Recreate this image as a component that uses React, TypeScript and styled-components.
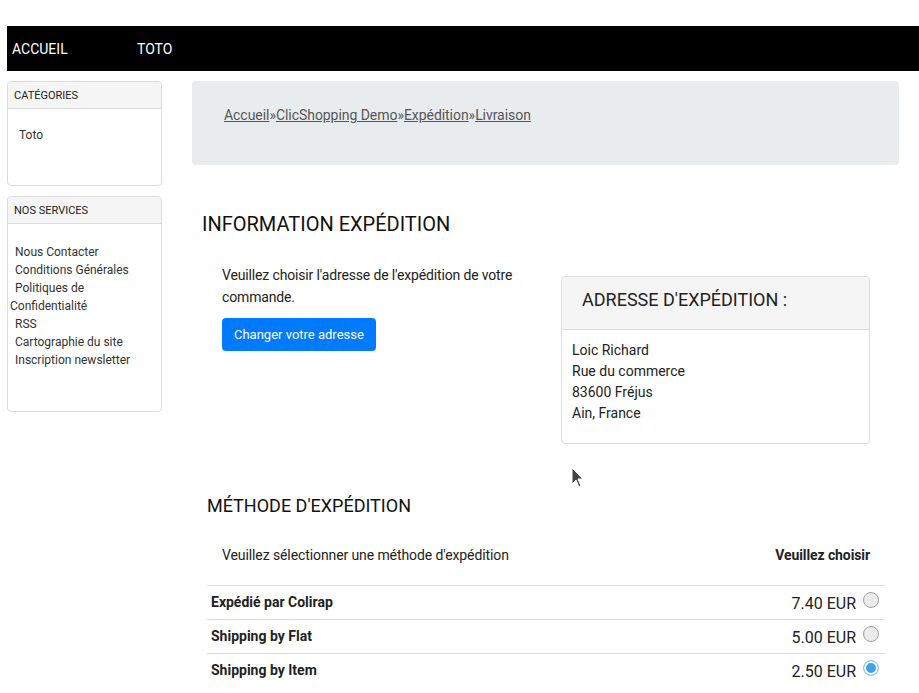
import React from "react";
import styled, { createGlobalStyle } from "styled-components";

const GlobalStyle = createGlobalStyle`
  html, body {
    margin: 0;
    padding: 0;
    background: #fff;
    font-family: Roboto, "Liberation Sans", sans-serif;
    color: #212529;
  }
`;

const Page = styled.div`
  position: relative;
  width: 919px;
  height: 693px;
  overflow: hidden;
  padding: 26px 0 0 7px;
  box-sizing: border-box;
`;

const NavBar = styled.nav`
  display: flex;
  align-items: center;
  height: 45px;
  background: #000;
  padding-left: 5px;
`;

const NavLink = styled.a<{ w?: number }>`
  color: #fff;
  font-size: 14px;
  text-decoration: none;
  width: ${(p) => (p.w ? `${p.w}px` : "auto")};
`;

const Layout = styled.div`
  display: flex;
  gap: 30px;
  margin-top: 10px;
`;

const Sidebar = styled.aside`
  width: 155px;
  display: flex;
  flex-direction: column;
  gap: 10px;
`;

const Box = styled.div<{ h: number }>`
  border: 1px solid #dcdcdc;
  border-radius: 4px;
  height: ${(p) => p.h}px;
  box-sizing: border-box;
  overflow: hidden;
`;

const BoxHeader = styled.div`
  height: 27px;
  background: #f5f5f5;
  border-bottom: 1px solid #dcdcdc;
  box-sizing: border-box;
  font-size: 11px;
  padding-left: 6px;
  display: flex;
  align-items: center;
  color: #222;
`;

const BoxBody = styled.div<{ pt: number }>`
  padding: ${(p) => p.pt}px 0 0 2px;
  font-size: 12px;
  color: #333;
  line-height: 18px;
`;

const SideLink = styled.div<{ indent?: number }>`
  padding-left: ${(p) => p.indent ?? 5}px;
`;

const Main = styled.main`
  width: 707px;
  display: flex;
  flex-direction: column;
`;

const Breadcrumb = styled.div`
  height: 84px;
  background: #e9ecef;
  border-radius: 4px;
  padding: 26px 0 0 32px;
  box-sizing: border-box;
  font-size: 14px;
  letter-spacing: -0.05px;
  color: #555;
  a {
    color: #555;
    text-decoration: underline;
  }
`;

const SectionTitle = styled.h2<{ size: number; mt: number; pl: number }>`
  font-size: ${(p) => p.size}px;
  font-weight: 400;
  margin: ${(p) => p.mt}px 0 0 ${(p) => p.pl}px;
  line-height: 1.2;
  color: #111;
`;

const InfoRow = styled.div`
  display: flex;
  justify-content: space-between;
  align-items: flex-start;
  margin-top: 28px;
  padding-left: 30px;
  width: 678px;
  box-sizing: border-box;
`;

const InfoText = styled.div`
  width: 310px;
  font-size: 14px;
  line-height: 22px;
  letter-spacing: -0.15px;
  color: #222;
`;

const Button = styled.button`
  margin-top: 10px;
  background: #007bff;
  color: #fff;
  border: none;
  border-radius: 4px;
  font-family: inherit;
  font-size: 13px;
  letter-spacing: 0;
  height: 33px;
  padding: 0 12px;
`;

const AddressCard = styled.div`
  width: 309px;
  height: 168px;
  margin-top: 12px;
  border: 1px solid #dcdcdc;
  border-radius: 4px;
  box-sizing: border-box;
  overflow: hidden;
`;

const AddressHeader = styled.div`
  height: 53px;
  background: #f5f5f5;
  border-bottom: 1px solid #dcdcdc;
  box-sizing: border-box;
  padding: 12px 0 0 20px;
  font-size: 18px;
  color: #222;
`;

const AddressBody = styled.div`
  padding: 10px 0 0 10px;
  font-size: 14px;
  line-height: 21px;
  color: #222;
`;

const MethodTable = styled.div`
  margin-top: 8px;
  margin-left: 15px;
  width: 678px;
`;

const MethodHead = styled.div`
  display: flex;
  justify-content: space-between;
  align-items: center;
  height: 60px;
  padding: 0 15px;
  font-size: 14px;
  letter-spacing: -0.1px;
  color: #222;
  border-bottom: 1px solid #dcdcdc;
  strong {
    font-weight: 700;
  }
`;

const MethodRow = styled.div`
  display: flex;
  justify-content: space-between;
  align-items: center;
  height: 33px;
  padding: 0 6px 0 4px;
  border-bottom: 1px solid #dcdcdc;
  &:last-child {
    border-bottom: none;
  }
`;

const MethodName = styled.div`
  font-size: 14px;
  font-weight: 700;
  color: #222;
  margin-top: -1px;
`;

const Price = styled.div`
  display: flex;
  align-items: center;
  gap: 7px;
  font-size: 16px;
  color: #222;
  padding-top: 3px;
`;

const Radio = styled.span<{ checked?: boolean }>`
  width: 16px;
  height: 16px;
  border-radius: 50%;
  box-sizing: border-box;
  margin-top: -7px;
  border: 1px solid ${(p) => (p.checked ? "#8cc7f0" : "#a0a0a0")};
  background: ${(p) => (p.checked ? "#3ca5ea" : "#ebebeb")};
  box-shadow: ${(p) => (p.checked ? "inset 0 0 0 2px #fff" : "none")};
`;

const Pointer = styled.svg`
  position: absolute;
  left: 571px;
  top: 467px;
`;

const methods = [
  { name: "Expédié par Colirap", price: "7.40 EUR" },
  { name: "Shipping by Flat", price: "5.00 EUR" },
  { name: "Shipping by Item", price: "2.50 EUR", checked: true },
];

export default function App() {
  return (
    <>
      <GlobalStyle />
      <Page>
        <NavBar>
          <NavLink w={125}>ACCUEIL</NavLink>
          <NavLink>TOTO</NavLink>
        </NavBar>
        <Layout>
          <Sidebar>
            <Box h={105}>
              <BoxHeader>CATÉGORIES</BoxHeader>
              <BoxBody pt={17}>
                <SideLink indent={9}>Toto</SideLink>
              </BoxBody>
            </Box>
            <Box h={216}>
              <BoxHeader>NOS SERVICES</BoxHeader>
              <BoxBody pt={19}>
                <SideLink>Nous Contacter</SideLink>
                <SideLink>Conditions Générales</SideLink>
                <SideLink>Politiques de</SideLink>
                <SideLink indent={0}>Confidentialité</SideLink>
                <SideLink>RSS</SideLink>
                <SideLink>Cartographie du site</SideLink>
                <SideLink>Inscription newsletter</SideLink>
              </BoxBody>
            </Box>
          </Sidebar>
          <Main>
            <Breadcrumb>
              <a>Accueil</a>»<a>ClicShopping Demo</a>»<a>Expédition</a>»<a>Livraison</a>
            </Breadcrumb>
            <SectionTitle size={20} mt={47} pl={10}>
              INFORMATION EXPÉDITION
            </SectionTitle>
            <InfoRow>
              <InfoText>
                Veuillez choisir l'adresse de l'expédition de votre commande.
                <div>
                  <Button>Changer votre adresse</Button>
                </div>
              </InfoText>
              <AddressCard>
                <AddressHeader>ADRESSE D'EXPÉDITION :</AddressHeader>
                <AddressBody>
                  Loic Richard
                  <br />
                  Rue du commerce
                  <br />
                  83600 Fréjus
                  <br />
                  Ain, France
                </AddressBody>
              </AddressCard>
            </InfoRow>
            <SectionTitle size={18} mt={51} pl={15}>
              MÉTHODE D'EXPÉDITION
            </SectionTitle>
            <MethodTable>
              <MethodHead>
                <span>Veuillez sélectionner une méthode d'expédition</span>
                <strong>Veuillez choisir</strong>
              </MethodHead>
              {methods.map((m) => (
                <MethodRow key={m.name}>
                  <MethodName>{m.name}</MethodName>
                  <Price>
                    {m.price}
                    <Radio checked={m.checked} />
                  </Price>
                </MethodRow>
              ))}
            </MethodTable>
          </Main>
        </Layout>
        <Pointer width="14" height="22" viewBox="0 0 14 22">
          <path d="M1 1 L1 17 L5 13 L8 20 L10 19 L7 12 L12 12 Z" fill="#444" stroke="#fff" strokeWidth="1" />
        </Pointer>
      </Page>
    </>
  );
}
